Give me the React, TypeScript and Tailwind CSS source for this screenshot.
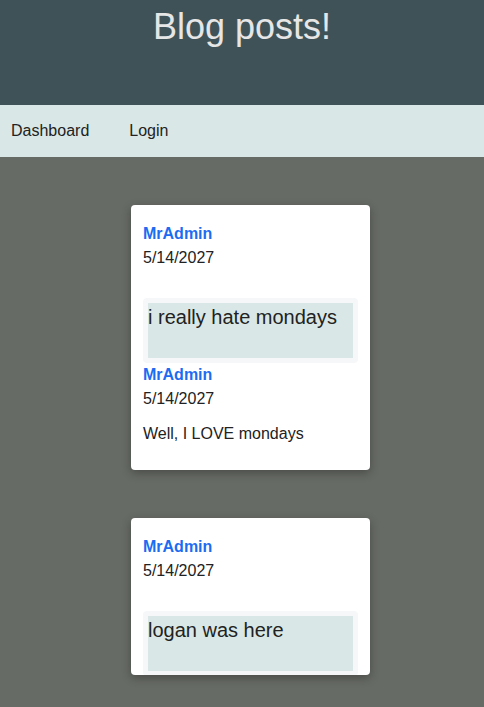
import React from "react";

interface Comment {
  author: string;
  date: string;
  text: string;
}

interface Post {
  author: string;
  date: string;
  title: string;
  comments: Comment[];
  clipped?: boolean;
}

const posts: Post[] = [
  {
    author: "MrAdmin",
    date: "5/14/2027",
    title: "i really hate mondays",
    comments: [{ author: "MrAdmin", date: "5/14/2027", text: "Well, I LOVE mondays" }],
  },
  {
    author: "MrAdmin",
    date: "5/14/2027",
    title: "logan was here",
    comments: [],
    clipped: true,
  },
];

const Meta = ({ author, date }: { author: string; date: string }) => (
  <div className="leading-6">
    <p className="font-bold text-[#1b6cf2]">{author}</p>
    <p>{date}</p>
  </div>
);

export default function App() {
  return (
    <div className="min-h-[707px] bg-[#676b65] font-['Liberation_Sans',Arial,sans-serif] text-[#222]">
      {/* Header */}
      <header className="h-[105px] bg-[#3f5257] pt-[6px]">
        <h1 className="text-center text-[36px] leading-[42px] text-[#e6e6e6]">Blog posts!</h1>
      </header>

      {/* Nav */}
      <nav className="flex h-[52px] items-center gap-10 bg-[#d9e8e6] pl-[11px] text-base">
        <a>Dashboard</a>
        <a>Login</a>
      </nav>

      {/* Posts */}
      <main className="flex flex-col items-center gap-12 pt-12">
        {posts.map((post, idx) => (
          <div
            key={idx}
            className={`ml-[17px] w-[239px] overflow-hidden rounded-[4px] bg-white px-3 pt-[17px] pb-[24px] shadow-[0_3px_10px_rgba(0,0,0,0.3)] ${
              post.clipped ? "h-[157px]" : ""
            }`}
          >
            <Meta author={post.author} date={post.date} />
            <div className="mt-[28px] rounded-[4px] bg-[#f5f7f9] p-[5px]">
              <div className="h-[55px] bg-[#d9e8e6] text-[20px] leading-[28px]">{post.title}</div>
            </div>
            {post.comments.map((c, i) => (
              <div key={i}>
                <Meta author={c.author} date={c.date} />
                <p className="mt-[11px] leading-6">{c.text}</p>
              </div>
            ))}
          </div>
        ))}
      </main>
    </div>
  );
}
